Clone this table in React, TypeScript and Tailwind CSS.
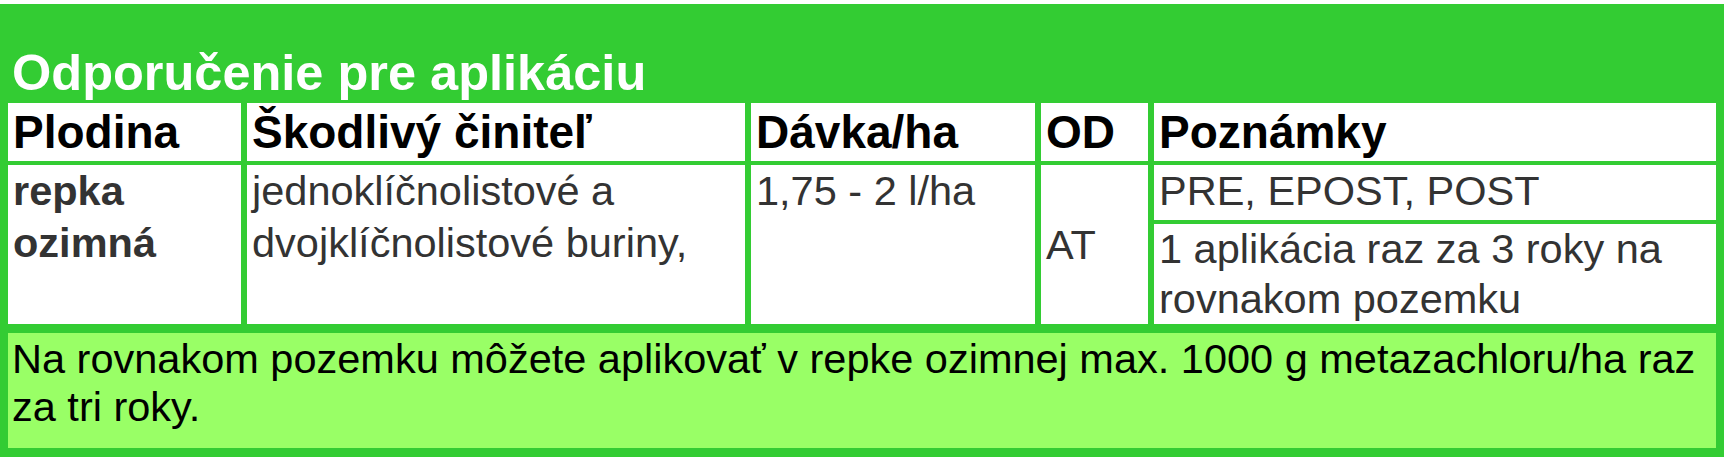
export default function App() {
  return (
    <div className="w-[1724px] h-[462px] bg-white pt-[4px] font-['Liberation_Sans',Arial,sans-serif]">
      <div className="bg-[#33cc33] h-[453px] px-[8px]">
        {/* Title */}
        <div className="h-[99px] flex items-end pb-[5px] pl-[4px]">
          <h1 className="text-[50.5px] leading-none font-bold text-white">Odporučenie pre aplikáciu</h1>
        </div>

        {/* Table */}
        <div className="grid grid-cols-[233px_498px_284px_107px_562px] grid-rows-[58px_159px] gap-x-[6px] gap-y-[4px]">
          <div className="bg-white pl-[5px] text-[46px] leading-[58px] font-bold text-black">Plodina</div>
          <div className="bg-white pl-[5px] text-[46px] leading-[58px] font-bold text-black">Škodlivý činiteľ</div>
          <div className="bg-white pl-[5px] text-[46px] leading-[58px] font-bold text-black">Dávka/ha</div>
          <div className="bg-white pl-[5px] text-[46px] leading-[58px] font-bold text-black">OD</div>
          <div className="bg-white pl-[5px] text-[46px] leading-[58px] font-bold text-black">Poznámky</div>

          <div className="bg-white pl-[5px] text-[41.5px] leading-[52px] font-bold text-[#333333]">
            repka
            <br />
            ozimná
          </div>
          <div className="bg-white pl-[5px] text-[41.5px] leading-[52px] text-[#333333]">
            jednoklíčnolistové a
            <br />
            dvojklíčnolistové buriny,
          </div>
          <div className="bg-white pl-[5px] text-[41.5px] leading-[52px] text-[#333333]">1,75 - 2 l/ha</div>
          <div className="bg-white pl-[5px] flex items-center text-[41.5px] leading-[52px] text-[#333333]">AT</div>
          <div className="flex flex-col gap-[4px]">
            <div className="bg-white h-[56px] pl-[5px] text-[41.5px] leading-[52px] text-[#333333]">PRE, EPOST, POST</div>
            <div className="bg-white flex-1 pl-[5px] text-[41.5px] leading-[50px] text-[#333333]">
              1 aplikácia raz za 3 roky na rovnakom pozemku
            </div>
          </div>
        </div>

        {/* Footer note */}
        <div className="mt-[9px] h-[115px] bg-[#99ff66] pl-[4px] pr-[6px] pt-[2px] text-[41.5px] leading-[48px] text-black">
          Na rovnakom pozemku môžete aplikovať v repke ozimnej max. 1000 g metazachloru/ha raz za tri roky.
        </div>
      </div>
    </div>
  );
}
